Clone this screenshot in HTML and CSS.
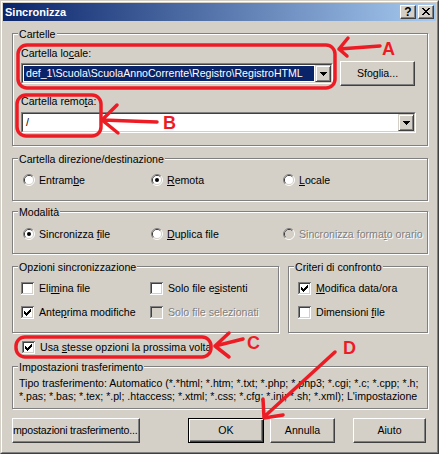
FILE: index.html
```html
<!DOCTYPE html>
<html>
<head>
<meta charset="utf-8">
<link rel="stylesheet" href="styles.css">
</head>
<body>
<svg class="defs" width="0" height="0" aria-hidden="true">
  <defs>
    <symbol id="cb" viewBox="0 0 13 13">
      <path d="M0 0h13v1H1v12H0z" fill="#808080"/>
      <path d="M12 1h1v12H0v-1h12z" fill="#fff"/>
      <path d="M1 1h11v1H2v10H1z" fill="#404040"/>
      <path d="M11 2h1v10H1v-1h10z" fill="#D4D0C8"/>
      <rect x="2" y="2" width="9" height="9" fill="#fff"/>
    </symbol>
    <symbol id="cbd" viewBox="0 0 13 13">
      <path d="M0 0h13v1H1v12H0z" fill="#808080"/>
      <path d="M12 1h1v12H0v-1h12z" fill="#fff"/>
      <path d="M1 1h11v1H2v10H1z" fill="#404040"/>
      <path d="M11 2h1v10H1v-1h10z" fill="#D4D0C8"/>
      <rect x="2" y="2" width="9" height="9" fill="#D4D0C8"/>
    </symbol>
    <symbol id="chk" viewBox="0 0 13 13">
      <path d="M9 3h1v1h-1zM8 4h2v1h-2zM3 5h1v1h-1zM7 5h3v1h-3zM3 6h2v1h-2zM6 6h3v1h-3zM3 7h5v1h-5zM4 8h3v1h-3zM5 9h1v1h-1z" fill="#000"/>
    </symbol>
    <symbol id="rd" viewBox="0 0 12 12">
      <path d="M2.11 9.89A5.5 5.5 0 0 1 9.89 2.11" stroke="#808080" fill="none"/>
      <path d="M9.89 2.11A5.5 5.5 0 0 1 2.11 9.89" stroke="#fff" fill="none"/>
      <path d="M2.82 9.18A4.5 4.5 0 0 1 9.18 2.82" stroke="#404040" fill="none"/>
      <path d="M9.18 2.82A4.5 4.5 0 0 1 2.82 9.18" stroke="#D4D0C8" fill="none"/>
      <circle cx="6" cy="6" r="4" fill="#fff"/>
    </symbol>
    <symbol id="rdd" viewBox="0 0 12 12">
      <path d="M2.11 9.89A5.5 5.5 0 0 1 9.89 2.11" stroke="#808080" fill="none"/>
      <path d="M9.89 2.11A5.5 5.5 0 0 1 2.11 9.89" stroke="#fff" fill="none"/>
      <path d="M2.82 9.18A4.5 4.5 0 0 1 9.18 2.82" stroke="#404040" fill="none"/>
      <path d="M9.18 2.82A4.5 4.5 0 0 1 2.82 9.18" stroke="#D4D0C8" fill="none"/>
      <circle cx="6" cy="6" r="4" fill="#D4D0C8"/>
    </symbol>
    <symbol id="arrow" viewBox="0 0 7 4">
      <path d="M0 0h7v1h-1v1h-1v1h-1v1h-1v-1h-1v-1h-1v-1h-1z" fill="#000"/>
    </symbol>
  </defs>
</svg>

<div class="window">
  <div class="frame">
    <div class="titlebar">
      <span class="title">Sincronizza</span>
      <div class="tbtns">
        <span class="tbtn help">?</span>
        <span class="tbtn"><svg width="8" height="7" viewBox="0 0 8 7" shape-rendering="crispEdges"><path d="M0 0h2v1h-2zM6 0h2v1h-2zM1 1h2v1h-2zM5 1h2v1h-2zM2 2h4v1h-4zM3 3h2v1h-2zM2 4h4v1h-4zM1 5h2v1h-2zM5 5h2v1h-2zM0 6h2v1h-2zM6 6h2v1h-2z" fill="#000"/></svg></span>
      </div>
    </div>

    <div class="content">
      <div class="group g-cartelle">
        <span class="legend">Cartelle</span>
        <div class="label">Cartella lo<u>c</u>ale:</div>
        <div class="row1">
          <div class="combo c1">
            <div class="combo-in">
              <div class="field"><span class="sel">def_1\Scuola\ScuolaAnnoCorrente\Registro\RegistroHTML</span></div>
              <span class="ddbtn"><svg width="7" height="4" shape-rendering="crispEdges"><use href="#arrow"/></svg></span>
            </div>
          </div>
          <div class="btn sfoglia">Sfoglia...</div>
        </div>
        <div class="label l2">Cartella remo<u>t</u>a:</div>
        <div class="combo c2">
          <div class="combo-in">
            <div class="field"><span class="val">/</span></div>
            <span class="ddbtn"><svg width="7" height="4" shape-rendering="crispEdges"><use href="#arrow"/></svg></span>
          </div>
        </div>
      </div>

      <div class="group g-dir">
        <span class="legend">Cartella direzione/destinazione</span>
        <div class="opts">
          <div class="opt"><svg class="rdo" width="12" height="12"><use href="#rd"/></svg><span>Entram<u>b</u>e</span></div>
          <div class="opt"><svg class="rdo" width="12" height="12"><use href="#rd"/><circle cx="6" cy="6" r="2" fill="#000"/></svg><span><u>R</u>emota</span></div>
          <div class="opt"><svg class="rdo" width="12" height="12"><use href="#rd"/></svg><span><u>L</u>ocale</span></div>
        </div>
      </div>

      <div class="group g-mod">
        <span class="legend">Modalità</span>
        <div class="opts">
          <div class="opt"><svg class="rdo" width="12" height="12"><use href="#rd"/><circle cx="6" cy="6" r="2" fill="#000"/></svg><span>Sincronizza <u>f</u>ile</span></div>
          <div class="opt"><svg class="rdo" width="12" height="12"><use href="#rd"/></svg><span><u>D</u>uplica file</span></div>
          <div class="opt"><svg class="rdo" width="12" height="12"><use href="#rdd"/></svg><span class="dis">Sincronizza forma<u>t</u>o orario</span></div>
        </div>
      </div>

      <div class="grow">
        <div class="group g-opz">
          <span class="legend">Opzioni sincronizzazione</span>
          <div class="cgrid">
            <div class="chk"><svg width="13" height="13" shape-rendering="crispEdges"><use href="#cb"/></svg><span>Eli<u>m</u>ina file</span></div>
            <div class="chk"><svg width="13" height="13" shape-rendering="crispEdges"><use href="#cb"/></svg><span>Solo file e<u>s</u>istenti</span></div>
            <div class="chk"><svg width="13" height="13" shape-rendering="crispEdges"><use href="#cb"/><use href="#chk"/></svg><span>Ante<u>p</u>rima modifiche</span></div>
            <div class="chk"><svg width="13" height="13" shape-rendering="crispEdges"><use href="#cbd"/></svg><span class="dis">Solo file selezionati</span></div>
          </div>
        </div>
        <div class="group g-crit">
          <span class="legend">Criteri di confronto</span>
          <div class="cgrid one">
            <div class="chk"><svg width="13" height="13" shape-rendering="crispEdges"><use href="#cb"/><use href="#chk"/></svg><span><u>M</u>odifica data/ora</span></div>
            <div class="chk"><svg width="13" height="13" shape-rendering="crispEdges"><use href="#cb"/></svg><span>Dimensioni <u>f</u>ile</span></div>
          </div>
        </div>
      </div>

      <div class="chk usa"><svg width="13" height="13" shape-rendering="crispEdges"><use href="#cb"/><use href="#chk"/></svg><span>Usa <u>s</u>tesse opzioni la prossima volta</span></div>

      <div class="group g-imp">
        <span class="legend">Impostazioni trasferimento</span>
        <div class="imptext">
          <div class="impline">Tipo trasferimento: Automatico (*.*html; *.htm; *.txt; *.php; *.php3; *.cgi; *.c; *.cpp; *.h;</div>
          <div class="impline">*.pas; *.bas; *.tex; *.pl; .htaccess; *.xtml; *.css; *.cfg; *.ini; *.sh; *.xml); L'impostazione</div>
        </div>
      </div>

      <div class="buttons">
        <div class="btn b-imp">mpostazioni trasferimento...</div>
        <div class="btn b-ok default">OK</div>
        <div class="btn b-ann">Annulla</div>
        <div class="btn b-aiu">Aiuto</div>
      </div>
    </div>
  </div>

  <svg class="annot" width="439" height="454" viewBox="0 0 439 454">
    <g fill="none" stroke="#ED1C24" stroke-width="3.5" stroke-linecap="round" stroke-linejoin="round">
      <rect x="18" y="45" width="317" height="43" rx="9"/>
      <path d="M380 46 L339 49 M348 38 L339 49 L347 56"/>
      <rect x="17" y="95" width="84" height="41" rx="9"/>
      <path d="M157 122 L102 120 M117 105 L102 120 L118 133"/>
      <rect x="16" y="337" width="195" height="20" rx="9"/>
      <path d="M243 339 L215 346 M229 333 L215 346 L229 357"/>
      <path d="M335 352 L265 416 M263 399 L264 418 L283 415"/>
    </g>
    <g fill="#ED1C24" font-family="Liberation Sans, Arial, sans-serif" font-weight="bold" font-size="18">
      <text x="382" y="55">A</text>
      <text x="163" y="129">B</text>
      <text x="247" y="349">C</text>
      <text x="343" y="354">D</text>
    </g>
  </svg>
</div>
</body>
</html>
```

FILE: styles.css
```css
* { box-sizing: border-box; }

body {
  margin: 0;
  background: #D4D0C8;
  font-family: "Liberation Sans", Arial, sans-serif;
  font-size: 10.6px;
  line-height: 13px;
  color: #000;
}

.defs { position: absolute; width: 0; height: 0; overflow: hidden; }

.window {
  position: relative;
  width: 439px;
  height: 454px;
  border: 1px solid;
  border-color: #D4D0C8 #404040 #404040 #D4D0C8;
  background: #D4D0C8;
  overflow: hidden;
}

.frame {
  height: 100%;
  border: 1px solid;
  border-color: #fff #808080 #808080 #fff;
  padding: 1px;
}

.titlebar {
  height: 18px;
  display: flex;
  align-items: flex-start;
  background: linear-gradient(to right, #0A246A, #A6CAF0);
  padding: 0 2px;
}

.title {
  flex: 1;
  color: #fff;
  font-weight: bold;
  font-size: 11px;
  line-height: 18px;
}

.tbtns {
  display: flex;
  gap: 2px;
  margin-top: 2px;
}

.tbtn {
  width: 16px;
  height: 14px;
  border: 1px solid;
  border-color: #fff #404040 #404040 #fff;
  box-shadow: inset -1px -1px #808080;
  background: #D4D0C8;
  display: flex;
  align-items: center;
  justify-content: center;
}

.tbtn svg { display: block; margin-left: -1px; margin-top: -1px; }

.help {
  font-weight: bold;
  font-size: 12px;
  line-height: 12px;
  padding-bottom: 1px;
}

.content {
  padding: 12px 8px 0 9px;
}

.group {
  position: relative;
  border: 1px solid #808080;
  box-shadow: inset 1px 1px #fff, 1px 1px #fff;
}

.legend {
  position: absolute;
  top: -6px;
  left: 5px;
  padding: 0 1px;
  background: #D4D0C8;
  white-space: nowrap;
}

.g-cartelle {
  height: 113px;
  padding: 13px 0 0 8px;
}

.row1 {
  display: flex;
  align-items: flex-start;
  height: 25px;
  margin-top: 1px;
}

.combo {
  height: 21px;
  border: 1px solid;
  border-color: #808080 #fff #fff #808080;
}

.c1 { width: 312px; margin-top: 2px; }
.c2 { width: 395px; margin-top: 4px; }

.combo-in {
  height: 100%;
  display: flex;
  border: 1px solid;
  border-color: #404040 #D4D0C8 #D4D0C8 #404040;
  background: #fff;
}

.field {
  flex: 1;
  min-width: 0;
  overflow: hidden;
  padding: 1px;
}

.sel {
  display: block;
  height: 100%;
  background: #0A246A;
  color: #fff;
  white-space: nowrap;
  overflow: hidden;
  padding-left: 2px;
  line-height: 14px;
}

.val {
  display: block;
  padding-left: 2px;
  line-height: 14px;
}

.ddbtn {
  width: 16px;
  height: 17px;
  flex: none;
  border: 1px solid;
  border-color: #D4D0C8 #404040 #404040 #D4D0C8;
  box-shadow: inset 1px 1px #fff, inset -1px -1px #808080;
  background: #D4D0C8;
  display: flex;
  align-items: center;
  justify-content: center;
}

.ddbtn svg { display: block; }

.l2 { margin-top: 9px; }

.btn {
  height: 25px;
  display: flex;
  align-items: center;
  justify-content: center;
  border: 1px solid;
  border-color: #fff #404040 #404040 #fff;
  box-shadow: inset -1px -1px #808080;
  background: #D4D0C8;
  white-space: nowrap;
  overflow: hidden;
}

.sfoglia { width: 75px; margin-left: 7px; }

.g-dir {
  margin-top: 12px;
  height: 43px;
  padding: 15px 0 0 10px;
}

.g-mod {
  margin-top: 10px;
  height: 43px;
  padding: 16px 0 0 10px;
}

.opts {
  display: grid;
  grid-template-columns: 128px 132px auto;
}

.opt {
  display: flex;
  align-items: flex-start;
  gap: 4px;
  height: 12px;
  line-height: 12px;
  white-space: nowrap;
}

.rdo { display: block; flex: none; }

.dis {
  color: #808080;
  text-shadow: 1px 1px #fff;
}

.grow {
  display: flex;
  gap: 9px;
  margin-top: 12px;
}

.g-opz {
  width: 267px;
  height: 67px;
  padding: 15px 0 0 8px;
}

.g-crit {
  width: 140px;
  height: 67px;
  padding: 15px 0 0 9px;
}

.cgrid {
  display: grid;
  grid-template-columns: 129px auto;
  row-gap: 11px;
}

.cgrid.one { grid-template-columns: auto; }

.chk {
  display: flex;
  align-items: flex-start;
  gap: 5px;
  height: 13px;
  line-height: 13px;
  white-space: nowrap;
}

.chk svg { display: block; flex: none; }

.usa {
  margin-top: 8px;
  margin-left: 10px;
}

.g-imp {
  margin-top: 12px;
  height: 43px;
  padding: 10px 6px 0 6px;
}

.imptext {
  height: 26px;
  overflow: hidden;
}

.impline {
  white-space: nowrap;
  line-height: 13px;
}

.buttons {
  display: flex;
  margin-top: 9px;
}

.b-imp {
  width: 128px;
  justify-content: flex-start;
  letter-spacing: -0.2px;
  overflow: visible;
}
.b-ok { width: 76px; margin-left: 48px; }
.b-ann { width: 65px; margin-left: 6px; }
.b-aiu { width: 73px; margin-left: 18px; }

.default {
  border-color: #000;
  box-shadow: inset 1px 1px #fff, inset -1px -1px #404040, inset -2px -2px #808080;
}

.annot {
  position: absolute;
  left: -1px;
  top: -1px;
  pointer-events: none;
}
```
